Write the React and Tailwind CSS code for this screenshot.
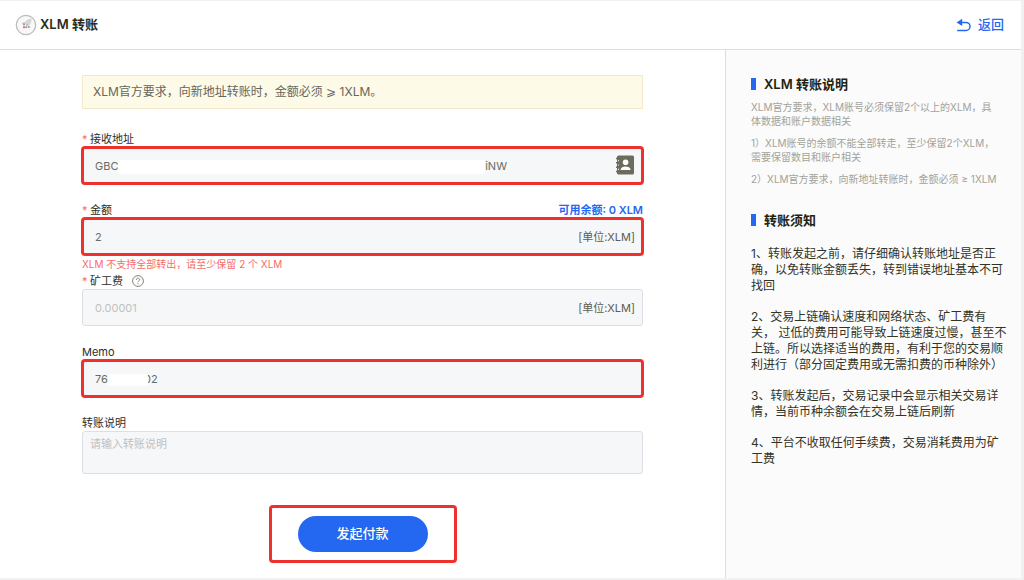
import { useState } from "react";

const FONT = "font-['Inter','Noto_Sans_CJK_SC',sans-serif]";

const inputBase =
    "block w-full h-[37px] px-3 rounded-[3px] border border-[#dcdfe3] bg-[#f6f7f9] text-[11px] text-[#6b6b60] placeholder-[#bfc1bd]";
const marked = "outline-3 -outline-offset-2 outline-[#ee312d]";
const overlay = "absolute inset-y-0 pt-0.5 flex items-center text-[11px] pointer-events-none";

function CoinLogo() {
    return (
        <svg viewBox="0 0 22 22" className="w-[22px] h-[22px]" aria-hidden="true">
            <circle cx="11" cy="11" r="9.7" fill="#f8f8f8" stroke="#bdbdbb" strokeWidth="1.3" />
            <path d="M9.4 9 C10.6 6.4 13.4 4.8 16.6 4.6 C16.8 7.4 15.8 10 13.6 12 Z" fill="#d6d6d6" />
            <path d="M6.4 8.8 L9.8 8.2 L10.8 10.2 L8 10.4 Z" fill="#cfcfd1" />
            <rect x="8" y="9.4" width="2" height="1.8" fill="#96999f" />
            <rect x="11" y="10.2" width="1.8" height="1.6" fill="#b3b5b9" />
            <rect x="8" y="12.2" width="2.4" height="2" fill="#e9786c" />
            <rect x="10.6" y="12.4" width="1.6" height="1.6" fill="#8b8f95" />
            <rect x="13" y="12" width="1.8" height="2" fill="#a5a8ac" />
        </svg>
    );
}

function BackIcon() {
    return (
        <svg viewBox="0 0 16 14" className="w-4 h-[14px]" fill="none" aria-hidden="true">
            <path d="M4 4.4 H10 A4 4 0 0 1 10 12.4 H1.2" stroke="#2468f2" strokeWidth="1.5" />
            <path d="M0.6 4.4 L6.2 0.8 V8 Z" fill="#2468f2" />
        </svg>
    );
}

function ContactsIcon() {
    return (
        <svg viewBox="0 0 18 20" className="w-[18px] h-5" aria-hidden="true">
            <rect x="1" y="0.5" width="17" height="19" rx="1.5" fill="#6c6c5e" />
            <path d="M0 3.5h2M0 7.8h2M0 12.2h2M0 16.5h2" stroke="#6c6c5e" strokeWidth="1.6" />
            <path d="M2 5.6h.9M2 10h.9M2 14.4h.9" stroke="#f6f7f9" strokeWidth="1.2" />
            <circle cx="9.6" cy="7.2" r="2.8" fill="#fff" />
            <path d="M4.6 15 C4.6 10.4 14.6 10.4 14.6 15 Z" fill="#fff" />
        </svg>
    );
}

function HelpIcon() {
    return (
        <svg viewBox="0 0 12 12" className="w-3 h-3" fill="none" stroke="#77776c" aria-hidden="true">
            <circle cx="6" cy="6" r="5.4" strokeWidth="0.9" />
            <path d="M4.4 4.8 C4.4 2.6 7.6 2.6 7.6 4.7 C7.6 5.9 6 5.9 6 7.2" strokeWidth="0.9" />
            <path d="M6 8.2v1" strokeWidth="1" />
        </svg>
    );
}

function Label({ id, required, children }) {
    return (
        <label htmlFor={id} className="flex items-center text-[11px] leading-4 text-[#2e2e1f]">
            {required && <span className="w-2 text-[#f56c6c]">*</span>}
            {children}
        </label>
    );
}

function SideTitle({ children }) {
    return (
        <h2 className="flex items-center gap-2 text-[13px] leading-5 font-semibold text-[#22220f]">
            <span className="w-[5px] h-3 bg-[#2468f2]" />
            {children}
        </h2>
    );
}

export default function App() {
    const [address, setAddress] = useState("GBC");
    const [amount, setAmount] = useState("2");
    const [fee, setFee] = useState("");
    const [memo, setMemo] = useState("76");
    const [note, setNote] = useState("");

    return (
        <div className={`min-h-screen flex flex-col bg-[#f1f1f1] pt-px pr-[3px] pb-[2px] ${FONT}`}>
            <header className="flex items-center justify-between h-[49px] pl-[15px] pr-[17px] bg-white border-b border-[#dddddd]">
                <h1 className="flex items-center gap-[3px] text-[13px] font-semibold text-[#2b2b1a]">
                    <CoinLogo />
                    XLM 转账
                </h1>
                <a href="#back" className="flex items-center gap-[6px] text-[13px] font-medium text-[#2468f2]">
                    <BackIcon />
                    返回
                </a>
            </header>

            <div className="flex-1 flex">
                <main className="flex-1 px-[82px] pt-[25px] pb-[14px] bg-white">
                    <div className="px-[10px] py-2 border border-[#f3e8cd] bg-[#fefae8] text-[12px] leading-4 text-[#66665a]">
                        XLM官方要求，向新地址转账时，金额必须 ⩾ 1XLM。
                    </div>

                    <form onSubmit={(e) => e.preventDefault()} className="mt-[22px] flex flex-col">
                        <div className="mb-[18px]">
                            <Label id="address" required>接收地址</Label>
                            <div className="relative">
                                <input
                                    id="address"
                                    value={address}
                                    onChange={(e) => setAddress(e.target.value)}
                                    className={`${inputBase} ${marked}`}
                                />
                                <div className={`${overlay} left-9 right-[136px] text-[#6b6b60]`}>
                                    <span className="flex-1 h-[14px] rounded-xs bg-white" />
                                    iNW
                                </div>
                                <button type="button" aria-label="地址簿" className="absolute top-2 right-[9px]">
                                    <ContactsIcon />
                                </button>
                            </div>
                        </div>

                        <div>
                            <div className="flex justify-between">
                                <Label id="amount" required>金额</Label>
                                <span className="text-[11px] leading-4 font-semibold text-[#2468f2]">可用余额: 0 XLM</span>
                            </div>
                            <div className="relative">
                                <input
                                    id="amount"
                                    value={amount}
                                    onChange={(e) => setAmount(e.target.value)}
                                    className={`${inputBase} ${marked}`}
                                />
                                <span className={`${overlay} right-2 text-[#5c5c50]`}>[单位:XLM]</span>
                            </div>
                            <p className="text-[10px] leading-[18px] text-[#f56c6c]">XLM 不支持全部转出，请至少保留 2 个 XLM</p>
                        </div>

                        <div className="mb-[18px]">
                            <div className="flex items-center gap-[9px]">
                                <Label id="fee" required>矿工费</Label>
                                <HelpIcon />
                            </div>
                            <div className="relative">
                                <input
                                    id="fee"
                                    value={fee}
                                    placeholder="0.00001"
                                    onChange={(e) => setFee(e.target.value)}
                                    className={inputBase}
                                />
                                <span className={`${overlay} right-2 text-[#5c5c50]`}>[单位:XLM]</span>
                            </div>
                        </div>

                        <div className="mb-[18px]">
                            <Label id="memo">Memo</Label>
                            <div className="relative">
                                <input
                                    id="memo"
                                    value={memo}
                                    onChange={(e) => setMemo(e.target.value)}
                                    className={`${inputBase} ${marked}`}
                                />
                                <div className={`${overlay} left-[26px] text-[#6b6b60]`}>
                                    <span className="relative z-10 w-10 h-3 -mr-1 rounded-xs bg-white" />
                                    02
                                </div>
                            </div>
                        </div>

                        <div>
                            <Label id="note">转账说明</Label>
                            <textarea
                                id="note"
                                value={note}
                                placeholder="请输入转账说明"
                                onChange={(e) => setNote(e.target.value)}
                                className="block w-full h-[43px] px-[7px] py-1 resize-none rounded-[3px] border border-[#dcdfe3] bg-[#f6f7f9] text-[11px] leading-4 text-[#6b6b60] placeholder-[#bfc1bd]"
                            />
                        </div>

                        <div className="self-center mt-[31px] px-[26px] py-2 rounded-sm border-3 border-[#ee312d]">
                            <button
                                type="submit"
                                className="block h-9 w-[130px] rounded-full bg-[#2468f2] text-[13px] font-medium text-white"
                            >
                                发起付款
                            </button>
                        </div>
                    </form>
                </main>

                <aside className="w-[296px] shrink-0 pl-[25px] pt-6 border-l border-[#dddddd] bg-[#fbfbfb]">
                    <SideTitle>XLM 转账说明</SideTitle>
                    <div className="mt-[6px] flex flex-col gap-2 text-[10px] leading-[14px] text-[#a2a29a]">
                        <p>XLM官方要求，XLM账号必须保留2个以上的XLM，具<br />体数据和账户数据相关</p>
                        <p>1）XLM账号的余额不能全部转走，至少保留2个XLM，<br />需要保留数目和账户相关</p>
                        <p>2）XLM官方要求，向新地址转账时，金额必须 ≥ 1XLM</p>
                    </div>

                    <div className="mt-6">
                        <SideTitle>转账须知</SideTitle>
                    </div>
                    <div className="mt-4 flex flex-col gap-[15px] text-[12px] leading-4 text-[#33331f]">
                        <p>1、转账发起之前，请仔细确认转账地址是否正<br />确，以免转账金额丢失，转到错误地址基本不可<br />找回</p>
                        <p>2、交易上链确认速度和网络状态、矿工费有<br />关， 过低的费用可能导致上链速度过慢，甚至不<br />上链。所以选择适当的费用，有利于您的交易顺<br />利进行（部分固定费用或无需扣费的币种除外）</p>
                        <p>3、转账发起后，交易记录中会显示相关交易详<br />情，当前币种余额会在交易上链后刷新</p>
                        <p>4、平台不收取任何手续费，交易消耗费用为矿<br />工费</p>
                    </div>
                </aside>
            </div>
        </div>
    );
}
